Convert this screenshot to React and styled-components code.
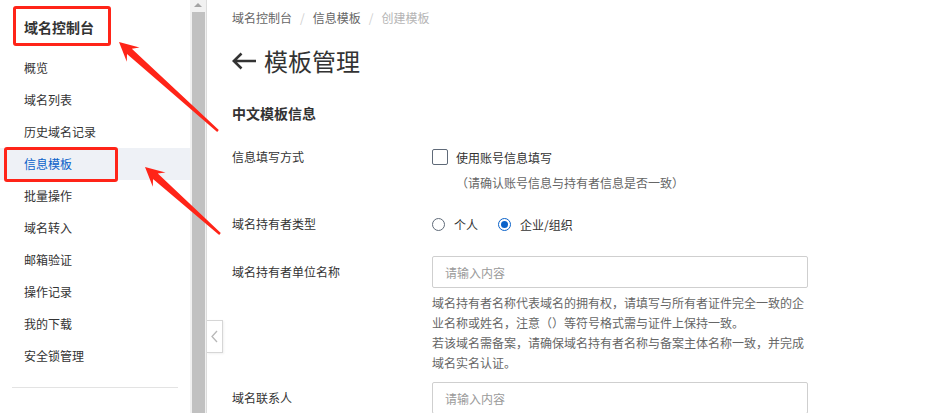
import React from "react"
import styled, { createGlobalStyle } from "styled-components"

const GlobalStyle = createGlobalStyle`
  html, body {
    margin: 0;
    padding: 0;
    background: #fff;
    font-family: "Noto Sans CJK SC", "Noto Sans", sans-serif;
    color: #333;
  }
  * { box-sizing: border-box; }
`

const Page = styled.div`
  position: relative;
  display: flex;
  width: 930px;
  height: 413px;
  overflow: hidden;
  background: #fff;
`

const Sidebar = styled.aside`
  flex: none;
  width: 190px;
  padding-top: 17px;
`

const SideTitle = styled.div`
  padding-left: 24px;
  font-size: 14px;
  font-weight: 700;
  line-height: 20px;
  color: #333;
`

const Menu = styled.ul`
  list-style: none;
  margin: 15px 0 0;
  padding: 0;
`

const MenuItem = styled.li`
  height: 32px;
  line-height: 32px;
  padding-left: 24px;
  font-size: 12px;
  color: ${(p) => (p.$active ? "#0a62c9" : "#333")};
  background: ${(p) => (p.$active ? "#eef1f6" : "transparent")};
`

const SideDivider = styled.div`
  height: 1px;
  margin: 15px 12px 0;
  background: #e3e3e3;
`

const ScrollTrack = styled.div`
  flex: none;
  width: 17px;
  display: flex;
  flex-direction: column;
  align-items: center;
  background: #f1f1f1;
  border-right: 1px solid #dcdcdc;
`

const ScrollArrow = styled.div`
  margin-top: 3px;
  width: 0;
  height: 0;
  border-left: 4px solid transparent;
  border-right: 4px solid transparent;
  border-bottom: 4px solid #a3a3a3;
`

const ScrollThumb = styled.div`
  margin-top: 5px;
  width: 13px;
  flex: 1;
  background: #c1c1c1;
`

const Main = styled.main`
  position: relative;
  flex: 1;
  padding: 8px 24px 0 25px;
`

const CollapseTab = styled.div`
  position: absolute;
  left: 0;
  top: 320px;
  width: 16px;
  height: 33px;
  display: flex;
  align-items: center;
  justify-content: center;
  background: #fff;
  border: 1px solid #d6d6d6;
  border-left: none;
  box-shadow: 1px 1px 2px rgba(0, 0, 0, 0.06);
`

const Breadcrumb = styled.nav`
  display: flex;
  align-items: center;
  height: 20px;
  font-size: 12px;
  line-height: 20px;
`

const Crumb = styled.span`
  color: ${(p) => (p.$current ? "#b5b5b5" : "#666")};
`

const CrumbSep = styled.span`
  color: #cfcfcf;
  padding: 0 8px;
`

const PageTitle = styled.h1`
  display: flex;
  align-items: center;
  gap: 8px;
  margin: 17px 0 0;
  height: 32px;
  font-size: 24px;
  font-weight: 400;
  line-height: 32px;
  color: #333;
`

const SectionTitle = styled.h2`
  margin: 26px 0 0;
  font-size: 14px;
  font-weight: 700;
  line-height: 20px;
  color: #333;
`

const FormItem = styled.div`
  display: grid;
  grid-template-columns: 200px 1fr;
  align-items: start;
  margin-top: ${(p) => p.$top}px;
`

const Label = styled.div`
  font-size: 12px;
  line-height: ${(p) => p.$lh}px;
  color: #333;
`

const Control = styled.div`
  display: flex;
  flex-direction: column;
`

const CheckRow = styled.label`
  display: flex;
  align-items: center;
  gap: 8px;
  height: 24px;
  font-size: 12px;
  color: #333;
`

const CheckBox = styled.span`
  width: 16px;
  height: 16px;
  border: 1px solid #5f6a78;
  border-radius: 2px;
  background: #fff;
`

const Hint = styled.div`
  margin-top: 4px;
  padding-left: 24px;
  font-size: 12px;
  line-height: 20px;
  color: #666;
`

const RadioGroup = styled.div`
  display: flex;
  align-items: center;
  gap: 20px;
  height: 24px;
`

const RadioOption = styled.label`
  display: flex;
  align-items: center;
  gap: 9px;
  font-size: 12px;
  color: #333;
`

const RadioDot = styled.span`
  position: relative;
  width: 13px;
  height: 13px;
  border-radius: 50%;
  border: 1px solid ${(p) => (p.$checked ? "#0a62c9" : "#5f6a78")};
  background: #fff;
  &::after {
    content: "";
    display: ${(p) => (p.$checked ? "block" : "none")};
    position: absolute;
    left: 2px;
    top: 2px;
    width: 7px;
    height: 7px;
    border-radius: 50%;
    background: #0a62c9;
  }
`

const InputBox = styled.div`
  display: flex;
  align-items: center;
  width: 376px;
  height: 32px;
  padding-left: 12px;
  border: 1px solid #cfcfcf;
  border-radius: 2px;
  background: #fff;
`

const TextInput = styled.input`
  flex: 1;
  min-width: 0;
  height: 100%;
  padding: 0;
  border: none;
  background: transparent;
  font-family: inherit;
  font-size: 12px;
  color: #333;
  outline: none;
  &::placeholder { color: #9a9a9a; }
`

const Help = styled.div`
  width: 376px;
  margin-top: 5px;
  font-size: 12px;
  line-height: 20px;
  color: #666;
  p { margin: 0; }
`

const Annotations = styled.svg`
  position: absolute;
  left: 0;
  top: 0;
  pointer-events: none;
`

const MarkBox = styled.div`
  position: absolute;
  left: ${(p) => p.$x}px;
  top: ${(p) => p.$y}px;
  width: ${(p) => p.$w}px;
  height: ${(p) => p.$h}px;
  border: 3px solid #ff2418;
  border-radius: 3px;
  pointer-events: none;
`

const menu = ["概览", "域名列表", "历史域名记录", "信息模板", "批量操作", "域名转入", "邮箱验证", "操作记录", "我的下载", "安全锁管理"]

// snipping-tool style arrow: tapering shaft with a swept-back head
function arrowPoints(tail, tip) {
  const dx = tip[0] - tail[0]
  const dy = tip[1] - tail[1]
  const len = Math.hypot(dx, dy)
  const ux = dx / len
  const uy = dy / len
  const nx = -uy
  const ny = ux
  const headLen = 19
  const headHalf = 9.5
  const base = [tip[0] - ux * headLen, tip[1] - uy * headLen]
  const join = [base[0] + ux * 5, base[1] + uy * 5]
  const pts = [
    [tail[0] + nx * 1.2, tail[1] + ny * 1.2],
    [join[0] + nx * 3.6, join[1] + ny * 3.6],
    [base[0] + nx * headHalf, base[1] + ny * headHalf],
    tip,
    [base[0] - nx * headHalf, base[1] - ny * headHalf],
    [join[0] - nx * 3.6, join[1] - ny * 3.6],
    [tail[0] - nx * 1.2, tail[1] - ny * 1.2]
  ]
  return pts.map((p) => p.map((v) => v.toFixed(1)).join(",")).join(" ")
}

const Field = ({ label, lh, top, children }) => (
  <FormItem $top={top}>
    <Label $lh={lh}>{label}</Label>
    <Control>{children}</Control>
  </FormItem>
)

export default function App() {
  return (
    <Page>
      <GlobalStyle />
      <Sidebar>
        <SideTitle>域名控制台</SideTitle>
        <Menu>
          {menu.map((m) => (
            <MenuItem key={m} $active={m === "信息模板"}>{m}</MenuItem>
          ))}
        </Menu>
        <SideDivider />
      </Sidebar>
      <ScrollTrack>
        <ScrollArrow />
        <ScrollThumb />
      </ScrollTrack>
      <Main>
        <CollapseTab>
          <svg width="7" height="13" viewBox="0 0 7 13">
            <path d="M6 1 L1 6.5 L6 12" fill="none" stroke="#b8b8b8" strokeWidth="1.3" />
          </svg>
        </CollapseTab>
        <Breadcrumb>
          <Crumb>域名控制台</Crumb>
          <CrumbSep>/</CrumbSep>
          <Crumb>信息模板</Crumb>
          <CrumbSep>/</CrumbSep>
          <Crumb $current>创建模板</Crumb>
        </Breadcrumb>
        <PageTitle>
          <svg width="24" height="18" viewBox="0 0 24 18">
            <path d="M1.5 9 H24 M9.5 1.5 L1.8 9 L9.5 16.5" fill="none" stroke="#333" strokeWidth="2.6" />
          </svg>
          模板管理
        </PageTitle>
        <SectionTitle>中文模板信息</SectionTitle>

        <Field label="信息填写方式" lh={24} top={22}>
          <CheckRow>
            <CheckBox />
            使用账号信息填写
          </CheckRow>
          <Hint>（请确认账号信息与持有者信息是否一致）</Hint>
        </Field>

        <Field label="域名持有者类型" lh={24} top={19}>
          <RadioGroup>
            <RadioOption>
              <RadioDot />
              个人
            </RadioOption>
            <RadioOption>
              <RadioDot $checked />
              企业/组织
            </RadioOption>
          </RadioGroup>
        </Field>

        <Field label="域名持有者单位名称" lh={32} top={20}>
          <InputBox>
            <TextInput placeholder="请输入内容" />
          </InputBox>
          <Help>
            <p>域名持有者名称代表域名的拥有权，请填写与所有者证件完全一致的企业名称或姓名，注意（）等符号格式需与证件上保持一致。</p>
            <p>若该域名需备案，请确保域名持有者名称与备案主体名称一致，并完成域名实名认证。</p>
          </Help>
        </Field>

        <Field label="域名联系人" lh={32} top={9}>
          <InputBox>
            <TextInput placeholder="请输入内容" />
          </InputBox>
        </Field>
      </Main>

      <MarkBox $x={13} $y={6} $w={98} $h={40} />
      <MarkBox $x={4} $y={147} $w={114} $h={35} />
      <Annotations width="930" height="413" viewBox="0 0 930 413">
        <polygon points={arrowPoints([218, 131], [119, 42])} fill="#ff2418" />
        <polygon points={arrowPoints([220, 234], [145, 167])} fill="#ff2418" />
      </Annotations>
    </Page>
  )
}
